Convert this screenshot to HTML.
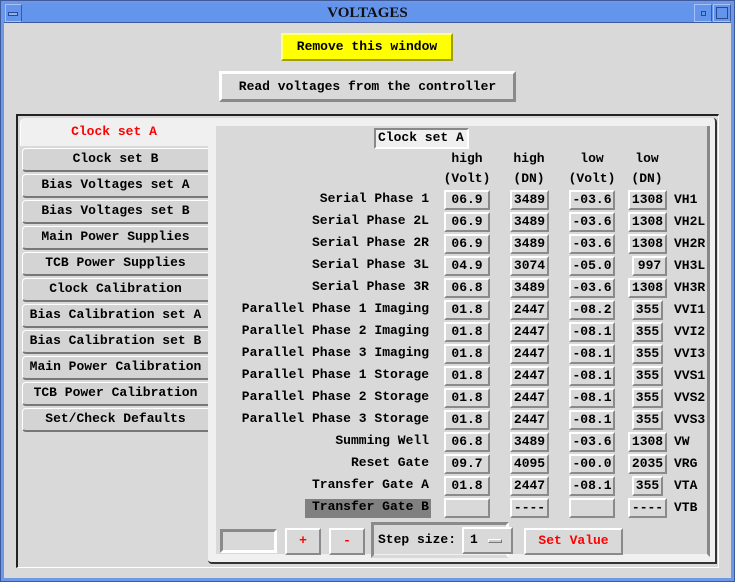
<!DOCTYPE html>
<html><head><meta charset="utf-8"><style>
*{box-sizing:border-box;margin:0;padding:0}
body{width:735px;height:582px;background:#d9d9d9;position:relative;overflow:hidden;font-family:"Liberation Mono",monospace;font-size:13px;font-weight:bold;color:#000}
.a{position:absolute}
.r{position:absolute;background:#d9d9d9;border-style:solid;border-width:2px;border-color:#fff #8a8a8a #8a8a8a #fff;text-align:center;line-height:16px;white-space:pre}
.s{position:absolute;border-style:solid;border-width:2px;border-color:#8a8a8a #fff #fff #8a8a8a}
.t{position:absolute;white-space:pre}
.tab{position:absolute;left:22px;width:186px;height:24px;background:#d4d4d4;border-top:1px solid #fff;border-left:1px solid #fff;border-bottom:2px solid #777;border-radius:4px 0 0 4px;text-align:center;line-height:20px;white-space:pre}
</style></head><body>
<!-- window frame -->
<div class="a" style="left:0;top:0;width:735px;height:582px;border:4px solid #6f97e8;border-top-width:3px"></div>
<div class="a" style="left:0;top:0;width:735px;height:582px;border:1px solid #3c5a9c"></div>
<div class="a" style="left:4px;top:3px;width:727px;height:20px;background:#6495ed;border-bottom:1px solid #3c5a9c"></div>
<div class="a" style="left:5px;top:4px;width:17px;height:18px;border:1px solid #a9c2f5;border-right-color:#3c5a9c"></div>
<div class="a" style="left:8px;top:12px;width:10px;height:4px;border:1px solid #2a4a8a;background:#8eb0f0"></div>
<div class="a" style="left:694px;top:4px;width:18px;height:18px;border:1px solid #a9c2f5;border-right-color:#3c5a9c"></div>
<div class="a" style="left:701px;top:11px;width:5px;height:5px;border:1px solid #2a4a8a"></div>
<div class="a" style="left:713px;top:4px;width:18px;height:18px;border:1px solid #a9c2f5;border-right-color:#3c5a9c"></div>
<div class="a" style="left:716px;top:7px;width:12px;height:12px;border:1px solid #2a4a8a"></div>
<div class="t" style="left:0;top:5px;width:735px;text-align:center;font-family:'Liberation Serif',serif;font-size:15px;color:#111">VOLTAGES</div>

<div class="r" style="left:281px;top:33px;width:172px;height:28px;background:#ffff00;border-color:#ffff80 #a0a000 #a0a000 #ffff80;line-height:24px">Remove this window</div>
<div class="r" style="left:219px;top:71px;width:297px;height:31px;border-width:3px;line-height:25px">Read voltages from the controller</div>

<!-- tab frame -->
<div class="a" style="left:16px;top:114px;width:703px;height:454px;border-top:2px solid #222;border-left:2px solid #222;border-right:1px solid #fff;border-bottom:1px solid #fff"></div>
<div class="a" style="left:20px;top:118px;width:188px;height:28px;background:#f0f0f0;border-radius:5px 0 0 0;border-left:1px solid #fff"></div>
<div class="t" style="left:20px;top:124px;width:188px;text-align:center;color:#f00">Clock set A</div>
<div class="a" style="left:208px;top:124px;height:24px;border-left:1px dashed #888"></div>
<div class="tab" style="top:148px">Clock set B</div>
<div class="tab" style="top:174px">Bias Voltages set A</div>
<div class="tab" style="top:200px">Bias Voltages set B</div>
<div class="tab" style="top:226px">Main Power Supplies</div>
<div class="tab" style="top:252px">TCB Power Supplies</div>
<div class="tab" style="top:278px">Clock Calibration</div>
<div class="tab" style="top:304px">Bias Calibration set A</div>
<div class="tab" style="top:330px">Bias Calibration set B</div>
<div class="tab" style="top:356px">Main Power Calibration</div>
<div class="tab" style="top:382px">TCB Power Calibration</div>
<div class="tab" style="top:408px">Set/Check Defaults</div>

<!-- right panel -->
<div class="a" style="left:208px;top:118px;width:509px;height:446px;background:#f0f0f0;border-radius:0 4px 0 4px;border-right:2px solid #333;border-bottom:2px solid #333"></div>
<div class="a" style="left:216px;top:126px;width:494px;height:431px;background:#d9d9d9;border-right:3px solid #888;border-bottom:3px solid #f0f0f0"></div>
<div class="s" style="left:374px;top:128px;width:95px;height:21px;background:#f0f0f0;border-color:#888 #fff #fff #888"></div>
<div class="t" style="left:378px;top:130px">Clock set A</div>

<div class="t" style="left:444px;top:151px;width:46px;text-align:center">high</div>
<div class="t" style="left:436px;top:171px;width:62px;text-align:center">(Volt)</div>
<div class="t" style="left:505px;top:151px;width:48px;text-align:center">high</div>
<div class="t" style="left:505px;top:171px;width:48px;text-align:center">(DN)</div>
<div class="t" style="left:562px;top:151px;width:60px;text-align:center">low</div>
<div class="t" style="left:562px;top:171px;width:60px;text-align:center">(Volt)</div>
<div class="t" style="left:622px;top:151px;width:50px;text-align:center">low</div>
<div class="t" style="left:622px;top:171px;width:50px;text-align:center">(DN)</div>

<div id="rows"></div>
<script>
var d=[["Serial Phase 1","06.9","3489","-03.6","1308","VH1"],
["Serial Phase 2L","06.9","3489","-03.6","1308","VH2L"],
["Serial Phase 2R","06.9","3489","-03.6","1308","VH2R"],
["Serial Phase 3L","04.9","3074","-05.0","997","VH3L"],
["Serial Phase 3R","06.8","3489","-03.6","1308","VH3R"],
["Parallel Phase 1 Imaging","01.8","2447","-08.2","355","VVI1"],
["Parallel Phase 2 Imaging","01.8","2447","-08.1","355","VVI2"],
["Parallel Phase 3 Imaging","01.8","2447","-08.1","355","VVI3"],
["Parallel Phase 1 Storage","01.8","2447","-08.1","355","VVS1"],
["Parallel Phase 2 Storage","01.8","2447","-08.1","355","VVS2"],
["Parallel Phase 3 Storage","01.8","2447","-08.1","355","VVS3"],
["Summing Well","06.8","3489","-03.6","1308","VW"],
["Reset Gate","09.7","4095","-00.0","2035","VRG"],
["Transfer Gate A","01.8","2447","-08.1","355","VTA"],
["Transfer Gate B","","----","","----","VTB"]];
var h="";
d.forEach(function(r,i){var y=190+22*i;
var last=i==14;
h+='<div class="t" style="left:'+(last?305:200)+'px;top:'+(y+1)+'px;width:'+(last?126:229)+'px;text-align:right;padding-right:'+(last?2:0)+'px;'+(last?'background:#808080;height:19px;':'')+'">'+r[0]+'</div>';
h+='<div class="r" style="left:444px;top:'+y+'px;width:46px;height:20px">'+r[1]+'</div>';
h+='<div class="r" style="left:510px;top:'+y+'px;width:39px;height:20px">'+r[2]+'</div>';
h+='<div class="r" style="left:569px;top:'+y+'px;width:46px;height:20px">'+r[3]+'</div>';
var w=r[4].length==4?39:(r[4]=="997"?35:31);var x=r[4].length==4?628:632;
h+='<div class="r" style="left:'+x+'px;top:'+y+'px;width:'+w+'px;height:20px">'+r[4]+'</div>';
h+='<div class="t" style="left:674px;top:'+(y+2)+'px">'+r[5]+'</div>';
});
document.getElementById("rows").innerHTML=h;
</script>

<!-- bottom controls -->
<div class="s" style="left:220px;top:529px;width:57px;height:24px;border-width:3px"></div>
<div class="r" style="left:285px;top:528px;width:36px;height:27px;color:#f00;line-height:22px">+</div>
<div class="r" style="left:329px;top:528px;width:36px;height:27px;color:#f00;line-height:22px">-</div>
<div class="s" style="left:371px;top:522px;width:138px;height:36px;border-width:3px;border-color:#8a8a8a #fff #d9d9d9 #8a8a8a"></div>
<div class="t" style="left:378px;top:532px">Step size:</div>
<div class="r" style="left:462px;top:527px;width:51px;height:27px"></div>
<div class="t" style="left:470px;top:532px">1</div>
<div class="a" style="left:488px;top:539px;width:14px;height:4px;background:#ccc;border:1px solid;border-color:#fff #777 #777 #fff"></div>
<div class="r" style="left:524px;top:528px;width:99px;height:27px;color:#f00;line-height:22px">Set Value</div>
</body></html>
